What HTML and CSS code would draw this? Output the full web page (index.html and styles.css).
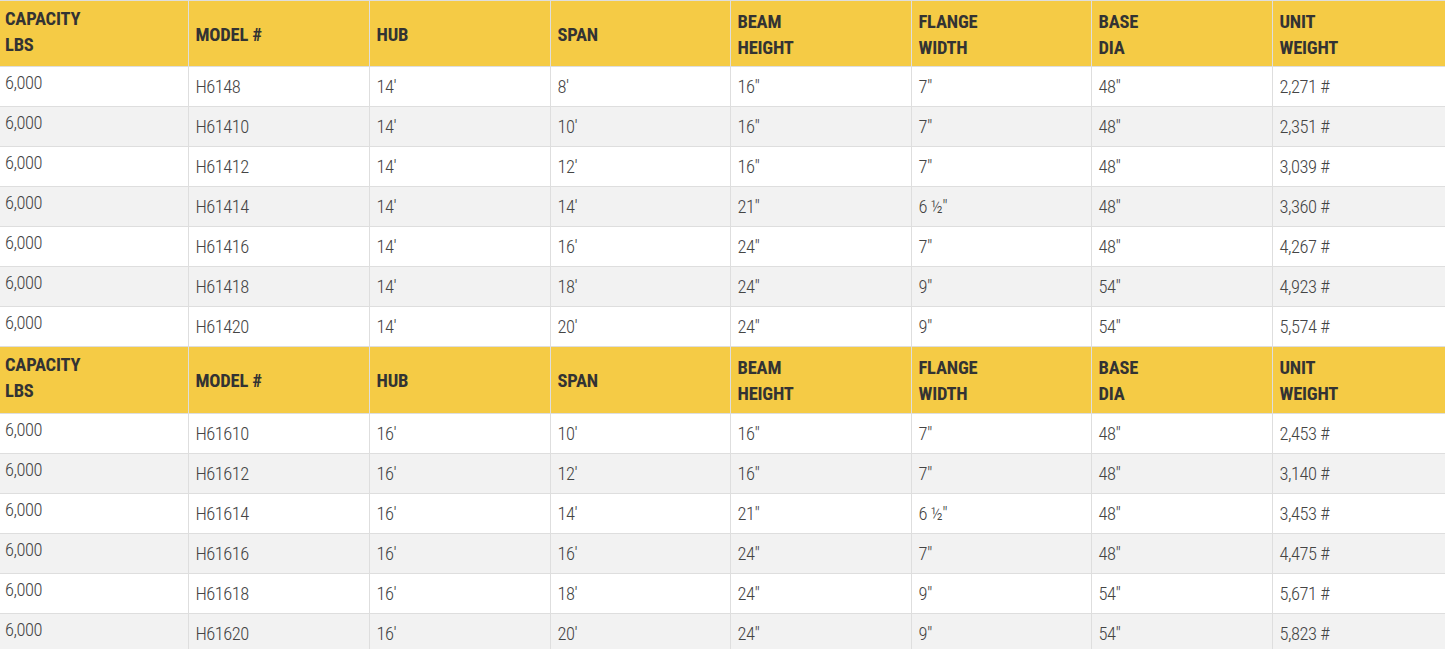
FILE: index.html
```html
<!DOCTYPE html>
<html>
<head>
<meta charset="utf-8">
<link rel="stylesheet" href="styles.css">
</head>
<body>
<table class="spec">
<colgroup><col class="w188"><col class="w181"><col class="w181"><col class="w180"><col class="w181"><col class="w180"><col class="w181"><col></colgroup>
<tbody>
<tr class="head"><th>CAPACITY<br>LBS</th><th>MODEL #</th><th>HUB</th><th>SPAN</th><th>BEAM<br>HEIGHT</th><th>FLANGE<br>WIDTH</th><th>BASE<br>DIA</th><th>UNIT<br>WEIGHT</th></tr>
<tr class="w"><td>6,000</td><td>H6148</td><td>14′</td><td>8′</td><td>16″</td><td>7″</td><td>48″</td><td>2,271 #</td></tr>
<tr class="g"><td>6,000</td><td>H61410</td><td>14′</td><td>10′</td><td>16″</td><td>7″</td><td>48″</td><td>2,351 #</td></tr>
<tr class="w"><td>6,000</td><td>H61412</td><td>14′</td><td>12′</td><td>16″</td><td>7″</td><td>48″</td><td>3,039 #</td></tr>
<tr class="g"><td>6,000</td><td>H61414</td><td>14′</td><td>14′</td><td>21″</td><td>6 ½″</td><td>48″</td><td>3,360 #</td></tr>
<tr class="w"><td>6,000</td><td>H61416</td><td>14′</td><td>16′</td><td>24″</td><td>7″</td><td>48″</td><td>4,267 #</td></tr>
<tr class="g"><td>6,000</td><td>H61418</td><td>14′</td><td>18′</td><td>24″</td><td>9″</td><td>54″</td><td>4,923 #</td></tr>
<tr class="w"><td>6,000</td><td>H61420</td><td>14′</td><td>20′</td><td>24″</td><td>9″</td><td>54″</td><td>5,574 #</td></tr>
<tr class="head mid"><th>CAPACITY<br>LBS</th><th>MODEL #</th><th>HUB</th><th>SPAN</th><th>BEAM<br>HEIGHT</th><th>FLANGE<br>WIDTH</th><th>BASE<br>DIA</th><th>UNIT<br>WEIGHT</th></tr>
<tr class="w"><td>6,000</td><td>H61610</td><td>16′</td><td>10′</td><td>16″</td><td>7″</td><td>48″</td><td>2,453 #</td></tr>
<tr class="g"><td>6,000</td><td>H61612</td><td>16′</td><td>12′</td><td>16″</td><td>7″</td><td>48″</td><td>3,140 #</td></tr>
<tr class="w"><td>6,000</td><td>H61614</td><td>16′</td><td>14′</td><td>21″</td><td>6 ½″</td><td>48″</td><td>3,453 #</td></tr>
<tr class="g"><td>6,000</td><td>H61616</td><td>16′</td><td>16′</td><td>24″</td><td>7″</td><td>48″</td><td>4,475 #</td></tr>
<tr class="w"><td>6,000</td><td>H61618</td><td>16′</td><td>18′</td><td>24″</td><td>9″</td><td>54″</td><td>5,671 #</td></tr>
<tr class="g"><td>6,000</td><td>H61620</td><td>16′</td><td>20′</td><td>24″</td><td>9″</td><td>54″</td><td>5,823 #</td></tr>
</tbody>
</table>
</body>
</html>
```
FILE: styles.css
```css
html, body {
  margin: 0;
  padding: 0;
  background: #fff;
}
.spec {
  width: 1445px;
  border-collapse: collapse;
  table-layout: fixed;
  font-family: "Roboto", "DejaVu Sans", sans-serif;
  font-stretch: 75%;
  color: #444;
}
.spec .w188 { width: 188px; }
.spec .w181 { width: 181px; }
.spec .w180 { width: 180px; }
.spec th, .spec td {
  border: 1px solid #dedede;
  text-align: left;
  vertical-align: middle;
  padding: 0 0 0 7px;
  white-space: nowrap;
}
.spec th:first-child, .spec td:first-child {
  border-left: none;
  padding-left: 5px;
}
.spec th:last-child, .spec td:last-child {
  border-right: none;
}
.spec tr.head {
  background: #f5cb45;
  height: 66px;
}
.spec tr.head.mid {
  height: 67px;
}
.spec th {
  font-weight: 700;
  font-size: 18.5px;
  letter-spacing: -0.2px;
  line-height: 26px;
  color: #333;
  padding-top: 2px;
}
.spec tr.head th:first-child {
  padding-top: 0;
  padding-bottom: 4px;
}
.spec tr.w, .spec tr.g {
  height: 40px;
}
.spec tr.g { background: #f2f2f2; }
.spec tr.w { background: #fff; }
.spec td {
  font-weight: 300;
  font-size: 18.5px;
  letter-spacing: -0.5px;
  line-height: 22px;
  padding-top: 1px;
}
.spec td:first-child {
  padding-top: 0;
  padding-bottom: 8px;
}
```
